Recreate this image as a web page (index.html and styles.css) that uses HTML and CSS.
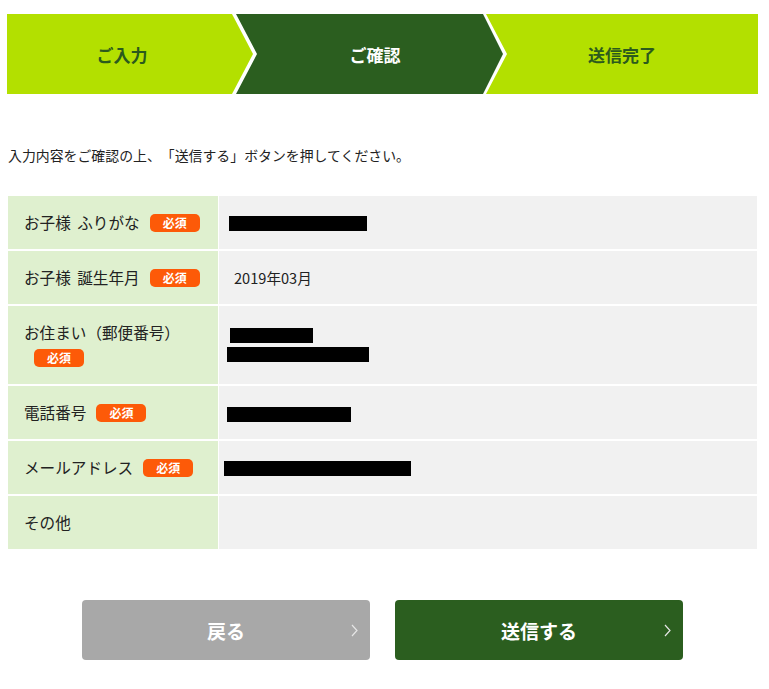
FILE: index.html
```html
<!DOCTYPE html>
<html lang="ja">
<head>
<meta charset="utf-8">
<title>ご確認</title>
<link rel="stylesheet" href="styles.css">
</head>
<body>
<div class="page">
  <ol class="steps">
    <li class="step step-first">ご入力</li>
    <li class="step step-mid step-current">ご確認</li>
    <li class="step step-last">送信完了</li>
  </ol>

  <p class="intro">入力内容をご確認の上、「送信する」ボタンを押してください。</p>

  <div class="confirm">
    <div class="label">お子様 ふりがな<span class="req">必須</span></div>
    <div class="value"><span class="mask m1"></span></div>

    <div class="label">お子様 誕生年月<span class="req">必須</span></div>
    <div class="value"><span class="v-text">2019年03月</span></div>

    <div class="label">お住まい（郵便番号）<span class="req">必須</span></div>
    <div class="value"><span class="mask m3a"></span><span class="mask m3b"></span></div>

    <div class="label">電話番号<span class="req">必須</span></div>
    <div class="value"><span class="mask m4"></span></div>

    <div class="label">メールアドレス<span class="req">必須</span></div>
    <div class="value"><span class="mask m5"></span></div>

    <div class="label">その他</div>
    <div class="value"></div>
  </div>

  <div class="actions">
    <button class="btn btn-back" type="button">
      <span class="btn-label">戻る</span>
      <svg class="chev" width="7" height="13" viewBox="0 0 7 13"><polyline points="1,1 6,6.5 1,12" fill="none" stroke="currentColor" stroke-width="1.2"/></svg>
    </button>
    <button class="btn btn-send" type="button">
      <span class="btn-label">送信する</span>
      <svg class="chev" width="7" height="13" viewBox="0 0 7 13"><polyline points="1,1 6,6.5 1,12" fill="none" stroke="currentColor" stroke-width="1.2"/></svg>
    </button>
  </div>
</div>
</body>
</html>
```

FILE: styles.css
```css
html, body {
  margin: 0;
  padding: 0;
  background: #ffffff;
}

body {
  font-family: "Noto Sans CJK JP", "Noto Sans", sans-serif;
  color: #222222;
  text-spacing-trim: space-all;
}

.page {
  width: 751px;
  margin-left: 7px;
  padding-top: 14px;
}

/* progress steps */
.steps {
  list-style: none;
  margin: 0;
  padding: 0;
  display: flex;
  height: 80px;
}

.step {
  display: flex;
  align-items: center;
  justify-content: center;
  height: 80px;
  font-size: 17px;
  font-weight: bold;
  color: #2b5a1d;
  background: #b3e000;
  box-sizing: border-box;
}

.step-first {
  width: 246px;
  padding-right: 16px;
  clip-path: polygon(0 0, 225px 0, 246px 50%, 225px 100%, 0 100%);
}

.step-mid {
  width: 267px;
  margin-left: -17px;
  padding-left: 21px;
  padding-right: 10px;
  clip-path: polygon(0 0, 247px 0, 267px 50%, 247px 100%, 0 100%, 21px 50%);
}

.step-last {
  width: 272px;
  margin-left: -17px;
  padding-left: 21px;
  padding-right: 21px;
  clip-path: polygon(0 0, 100% 0, 100% 100%, 0 100%, 21px 50%);
}

.step-current {
  background: #2b5e1f;
  color: #ffffff;
}

/* intro */
.intro {
  margin: 51px 0 0 1px;
  font-size: 13.9px;
  line-height: 20px;
  color: #222222;
}

/* confirmation table */
.confirm {
  margin: 31px 1px 0 1px;
  display: grid;
  grid-template-columns: 210px 1fr;
  column-gap: 1px;
  row-gap: 2px;
}

.label {
  background: #dff0cf;
  padding: 14px 6px 14px 16px;
  font-size: 15.6px;
  line-height: 25px;
  word-spacing: 3px;
  color: #222222;
  min-height: 25px;
}

.req {
  display: inline-block;
  width: 50px;
  height: 18px;
  margin-left: 10px;
  border-radius: 5px;
  background: #fd5a08;
  color: #ffffff;
  font-size: 12px;
  font-weight: bold;
  line-height: 18px;
  word-spacing: 0;
  text-align: center;
  vertical-align: 1px;
}

.value {
  background: #f1f1f1;
  padding-left: 5px;
  display: flex;
  flex-direction: column;
  justify-content: center;
  align-items: flex-start;
  font-size: 14.6px;
  color: #222222;
}

.v-text {
  margin-left: 10px;
  line-height: 20px;
}

.mask {
  display: block;
  height: 15px;
  background: #000000;
}

.m1 { width: 138px; margin-left: 5px; margin-top: 2px; }
.m3a { width: 83px; margin-left: 6px; }
.m3b { width: 142px; margin-left: 3px; margin-top: 4px; }
.m4 { width: 124px; margin-left: 3px; margin-top: 3px; }
.m5 { width: 187px; margin-left: 0; margin-top: 2px; }

/* buttons */
.actions {
  margin-top: 51px;
  display: flex;
  justify-content: center;
  gap: 25px;
}

.btn {
  width: 288px;
  height: 60px;
  border: none;
  border-radius: 4px;
  padding: 0 12px 0 0;
  display: grid;
  grid-template-columns: 1fr auto 1fr;
  align-items: center;
  font-family: "Noto Sans CJK JP", "Noto Sans", sans-serif;
  font-size: 19px;
  font-weight: bold;
  color: #ffffff;
  cursor: pointer;
}

.btn-label {
  grid-column: 2;
  padding-left: 12px;
}

.chev {
  grid-column: 3;
  justify-self: end;
  color: #e6e6e6;
}

.btn-back {
  background: #a8a8a8;
}

.btn-send {
  background: #2b5e1f;
}
```
